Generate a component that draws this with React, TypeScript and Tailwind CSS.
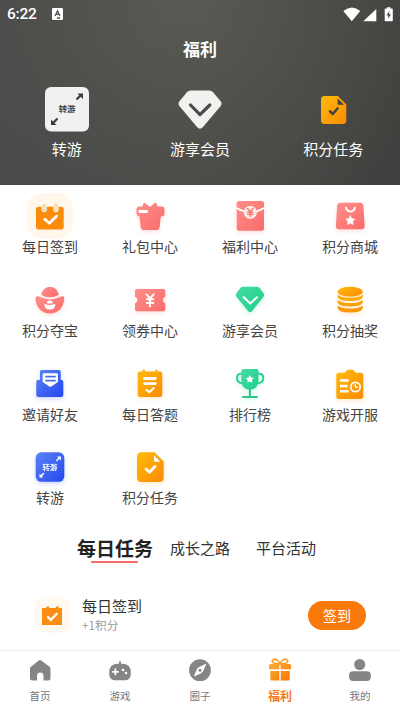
import type { ReactNode } from 'react';

const STAR = 'M0-4.6 1.5-1.7 4.6-1.2 2.4 1.1 2.8 4.3 0 2.9-2.8 4.3-2.4 1.1-4.6-1.2-1.5-1.7Z';

function Gradients() {
  return (
    <svg className="absolute w-0 h-0" aria-hidden="true">
      <defs>
        <linearGradient id="pink" x1="0" y1="0" x2="1" y2="1">
          <stop stopColor="#ff8e8a" />
          <stop offset="1" stopColor="#f96c6a" />
        </linearGradient>
        <linearGradient id="orange" x1="0" y1="0" x2="1" y2="1">
          <stop stopColor="#ffba0a" />
          <stop offset="1" stopColor="#fb8b05" />
        </linearGradient>
        <linearGradient id="green" x1="0" y1="0" x2="1" y2="1">
          <stop stopColor="#45dca0" />
          <stop offset="1" stopColor="#1fcf8c" />
        </linearGradient>
        <linearGradient id="blue" x1="0" y1="0" x2="1" y2="1">
          <stop stopColor="#5c83f6" />
          <stop offset="1" stopColor="#2447ee" />
        </linearGradient>
      </defs>
    </svg>
  );
}

function Icon({ glow, children }: { glow: string; children: ReactNode }) {
  return (
    <svg viewBox="0 0 48 48" className={`w-12 h-12 ${glow}`} fill="none" strokeLinecap="round" strokeLinejoin="round">
      {children}
    </svg>
  );
}

const PINK = 'drop-shadow-[0_2px_2px_rgba(255,110,105,0.2)]';
const ORANGE = 'drop-shadow-[0_2px_2px_rgba(255,165,20,0.2)]';
const GREEN = 'drop-shadow-[0_2px_2px_rgba(40,210,145,0.2)]';
const BLUE = 'drop-shadow-[0_2px_2px_rgba(50,90,240,0.25)]';

const CalendarIcon = () => (
  <Icon glow="">
    <rect x="1" y="1" width="46" height="46" rx="15" fill="#fff7ec" />
    <rect x="10" y="14.7" width="27.7" height="22.8" rx="2.5" fill="#fb8c0a" />
    <path d="M18.2 13.8V17.5M30 13.8V17.5" stroke="#fff7ec" strokeWidth="5.4" />
    <path d="M18.2 13.8V17.5M30 13.8V17.5" stroke="#f5cf8c" strokeWidth="3.6" />
    <path d="M18.2 14V17.5M30 14V17.5" stroke="#fff7ec" strokeWidth="1.2" />
    <path d="M18.8 27.3 23.3 31.3 30.7 24" stroke="#fff" strokeWidth="2.8" />
  </Icon>
);

const GiftBoxIcon = () => (
  <Icon glow={PINK}>
    <path d="M17.4 11.3q.6-.9 1.6-.2l5 3.8 4.8-3.8q1-.7 1.6.2l1 3.2h4.2q2.9 0 2.9 3v4q0 2.7-2.7 2.8l-1 .2-1.2 10.4Q33.3 38 30.5 38H17.8Q15 38 14.7 35L13.5 24.5l-1-.2q-2-.5-2-2.8v-4q0-3 3-3h3Z" fill="url(#pink)" />
    <rect x="12.5" y="18.1" width="9.4" height="2.8" rx="1.2" fill="#fff" />
  </Icon>
);

const EnvelopeIcon = () => (
  <Icon glow={PINK}>
    <rect x="10.7" y="9" width="27.3" height="29.7" rx="2.5" fill="url(#pink)" />
    <path d="M10.7 16Q24.3 24.5 38 16" stroke="#fff" strokeWidth="2" strokeLinecap="butt" />
    <circle cx="24.3" cy="20.3" r="6.6" fill="#ffe9e5" />
    <path d="M21.5 16.5 24.3 20 27.1 16.5M24.3 20V24.5M21.6 20.3H27M21.6 22.4H27" stroke="#f9716e" strokeWidth="1.3" />
  </Icon>
);

const BagIcon = () => (
  <Icon glow={PINK}>
    <path d="M14 10.7H34.5Q37 10.7 37.3 13.2L38.6 34Q38.6 37.3 35.5 37.3H13Q9.9 37.3 9.9 34L11.2 13.2Q11.5 10.7 14 10.7Z" fill="url(#pink)" />
    <path d="M20 15.6Q21 19.6 24.5 19.6T29 15.6" stroke="#fff" strokeWidth="1.9" />
    <path d={STAR} transform="translate(24.3 28.3)" fill="#fff" stroke="#fff" strokeWidth=".5" />
  </Icon>
);

const IngotIcon = () => (
  <Icon glow={PINK}>
    <path d="M15.3 19C16.5 13.5 19.5 11 24 11S31.5 13.5 32.7 19Q24 23.5 15.3 19Z" fill="url(#pink)" />
    <path d="M10.5 20.3Q12.500 19.800 14 21Q24 25.800 34 21Q35.700 19.800 37.500 20.300Q38.800 21 38.200 24C37 32 32 37.400 24 37.400S10.800 32 9.500 24Q9.200 21 10.500 20.300Z" fill="url(#pink)" />
    <path d="M20.6 26.9Q21.2 24.3 23.8 24.3T27 26.9Q23.8 28.3 20.6 26.9ZM18.5 27.7Q23.8 30.3 29.2 27.7Q29.800 33.500 23.800 33.500T18.500 27.700Z" fill="#fff" />
  </Icon>
);

const TicketIcon = () => (
  <Icon glow={PINK}>
    <path d="M11 13H37.300Q39.300 13 39.300 15V20.800Q36.800 21.800 36.800 24.200T39.300 27.600V33.300Q39.300 35.300 37.300 35.300H11Q9 35.300 9 33.300V27.600Q11.500 26.600 11.500 24.200T9 20.800V15Q9 13 11 13Z" fill="url(#pink)" />
    <path d="M20.5 18.300 24 22.300 27.600 18.300M24 22.300V30.600M20.800 23.300H27.300M20.800 27H27.300" stroke="#fff" strokeWidth="2" />
  </Icon>
);

const DiamondIcon = () => (
  <Icon glow={GREEN}>
    <path d="M17 10.7H31Q32.500 10.700 33.500 11.800L37.700 17.500Q38.800 19.300 37.300 21L26 35.300Q24.200 37 22.300 35.300L10.600 21Q9.200 19.300 10.300 17.500L14.500 11.800Q15.500 10.700 17 10.700Z" fill="url(#green)" />
    <path d="M17.700 21.300 24.200 27.500 31 21.300" stroke="#fff" strokeWidth="2.200" />
  </Icon>
);

const CoinsIcon = () => (
  <Icon glow={ORANGE}>
    <ellipse cx="24.200" cy="15.700" rx="12.500" ry="5" fill="url(#orange)" />
    <path d="M11.700 18.500Q14.500 21.700 24.200 21.700T36.700 18.500V21Q36 25 24.200 25T11.700 21Z" fill="#fbab08" />
    <path d="M11.700 24Q14.500 27.100 24.200 27.100T36.700 24V26.500Q36 30.500 24.200 30.500T11.700 26.500Z" fill="#fba007" />
    <path d="M11.700 29.500Q14.500 32.600 24.200 32.600T36.700 29.500V32Q36 36.500 24.200 36.500T11.700 32Z" fill="#fb9706" />
  </Icon>
);

const MailIcon = () => (
  <Icon glow={BLUE}>
    <path d="M15.500 10H33.200Q34.700 10 34.700 11.500V20H35.800Q37.300 20 37.300 21.500V35Q37.300 37 35.300 37H12.300Q10.300 37 10.300 35V21.500Q10.300 20 11.800 20H14V11.500Q14 10 15.500 10Z" fill="url(#blue)" />
    <path d="M18 13.200H30.800Q32 13.200 32 14.400V22L24.900 26.700Q24.300 27 23.700 26.700L16.700 22V14.400Q16.700 13.200 18 13.200Z" fill="#fff" />
    <path d="M20 16.600H29M20 20.600H29" stroke="#4d6df0" strokeWidth="1.900" />
  </Icon>
);

const QuizIcon = () => (
  <Icon glow={ORANGE}>
    <path d="M14 11.500H16.500V10.500Q16.500 9.500 17.700 9.500T19 10.500V11.500H29.300V10.500Q29.300 9.500 30.400 9.500T31.500 10.500V11.500H34Q36.300 11.500 36.300 13.800V34.700Q36.300 37 34 37H14Q11.700 37 11.700 34.700V13.800Q11.700 11.500 14 11.500Z" fill="url(#orange)" />
    <path d="M18.500 18.500H29.300M18.500 23.600H29.300" stroke="#fff" strokeWidth="2.800" />
    <path d="M20.300 29.700 23.300 32.300 27.700 28" stroke="#fff" strokeWidth="1.900" />
  </Icon>
);

const TrophyIcon = () => (
  <Icon glow={GREEN}>
    <path d="M16.500 13.700H14.500Q11 14 11 18.300T16 23.200M31.500 13.700H33.700Q37.300 14 37.300 18.300T32 23.200" stroke="#2bd193" strokeWidth="2" />
    <path d="M17.500 9H30.300Q32.500 9 32.500 11V20Q32.500 29.700 23.900 29.700T15.300 20V11Q15.300 9 17.500 9Z" fill="url(#green)" />
    <path d="M23.900 29V36.500M17 36.900H31" stroke="#27c98a" strokeWidth="2" />
    <path d={STAR} transform="translate(23.800 19) scale(.88)" fill="#fff" />
  </Icon>
);

const ScheduleIcon = () => (
  <Icon glow={ORANGE}>
    <path d="M13 12.700H18.500L21 10.300Q21.700 9.700 22.500 9.700H26Q26.800 9.700 27.500 10.300L29.500 12.700H34.700Q37.300 12.700 37.300 15.300V36.300Q37.300 38.900 34.700 38.900H13Q10.300 38.900 10.300 36.300V15.300Q10.300 12.700 13 12.700Z" fill="url(#orange)" />
    <path d="M14 20.600H22.700M14 26H21.500M14 31.300H22.700" stroke="#fff" strokeWidth="2.500" strokeLinecap="butt" />
    <circle cx="29.500" cy="27" r="4.700" stroke="#fff" strokeWidth="1.700" />
    <path d="M29.300 24.700V27.200H31.700" stroke="#fff" strokeWidth="1.300" />
  </Icon>
);

const TransferIcon = () => (
  <Icon glow={BLUE}>
    <rect x="9.700" y="9.300" width="28.600" height="29.500" rx="5.500" fill="url(#blue)" />
    <text x="24" y="26.700" textAnchor="middle" fill="#fff" fontSize="7.400" fontWeight="700">转游</text>
    <path d="M30.800 17.500 33.500 14.800M17.500 30.500 14.800 33.200" stroke="#fff" strokeWidth="1.500" />
    <path d="M31 13.500H34.900V17.400ZM13.500 30.700V34.500H17.300Z" fill="#fff" />
  </Icon>
);

const TaskIcon = () => (
  <Icon glow={ORANGE}>
    <path d="M15.500 9.300H28.500L37.700 18.500V34.500Q37.700 39 33.200 39H15.500Q11 39 11 34.500V13.800Q11 9.300 15.500 9.300Z" fill="url(#orange)" />
    <path d="M28 12.300V17.500Q28 18.800 29.300 18.800H34.300Z" fill="#fff" />
    <path d="M20 26 23.500 29.300 29 23.500" stroke="#fff" strokeWidth="2.800" />
  </Icon>
);

const services = [
  { label: '每日签到', icon: <CalendarIcon /> },
  { label: '礼包中心', icon: <GiftBoxIcon /> },
  { label: '福利中心', icon: <EnvelopeIcon /> },
  { label: '积分商城', icon: <BagIcon /> },
  { label: '积分夺宝', icon: <IngotIcon /> },
  { label: '领券中心', icon: <TicketIcon /> },
  { label: '游享会员', icon: <DiamondIcon /> },
  { label: '积分抽奖', icon: <CoinsIcon /> },
  { label: '邀请好友', icon: <MailIcon /> },
  { label: '每日答题', icon: <QuizIcon /> },
  { label: '排行榜', icon: <TrophyIcon /> },
  { label: '游戏开服', icon: <ScheduleIcon /> },
  { label: '转游', icon: <TransferIcon /> },
  { label: '积分任务', icon: <TaskIcon /> },
];

const shortcuts = [
  {
    label: '转游',
    icon: (
      <svg viewBox="0 0 46 46" className="w-[46px] h-[46px]">
        <rect x="1" y="1" width="44" height="44.500" rx="6" fill="#f1f1f1" />
        <text x="23" y="26" textAnchor="middle" fill="#454545" fontSize="8.400" fontWeight="700">转游</text>
        <path d="M32.500 13.500 36.500 9.500M13.500 32.500 9.500 36.500" stroke="#3c3c3c" strokeWidth="2.200" />
        <path d="M33.500 7.500H39V13ZM7 33.500V39H12.500Z" fill="#3c3c3c" />
      </svg>
    ),
  },
  {
    label: '游享会员',
    icon: (
      <svg viewBox="0 0 46 46" className="w-[46px] h-[46px]" fill="none" strokeLinecap="round" strokeLinejoin="round">
        <path d="M13.500 4.600H32.500Q34.500 4.600 36 6.200L43.500 15Q45.600 17.600 43.500 20.200L26 41Q23 44.500 20 41L2.600 20.200Q.5 17.600 2.600 15L10 6.200Q11.500 4.600 13.500 4.600Z" fill="#f1f1ef" />
        <path d="M13.500 19 23 28.700 32.800 19" stroke="#4b4b49" strokeWidth="3.200" />
      </svg>
    ),
  },
  {
    label: '积分任务',
    icon: (
      <svg viewBox="0 0 46 46" className="w-[46px] h-[46px]" fill="none" strokeLinecap="round" strokeLinejoin="round">
        <path d="M14.500 10H28L36.300 18.500V34.500Q36.300 38 33 38H14.500Q11 38 11 34.500V13.500Q11 10 14.500 10Z" fill="url(#orange)" />
        <path d="M27.700 12.300V18.700H34Z" fill="#444441" />
        <path d="M20 25.300 22.800 28 27.500 22.500" stroke="#444441" strokeWidth="2.600" />
      </svg>
    ),
  },
];

const navItems = [
  {
    label: '首页',
    icon: <path d="M10.700 2.500Q12 1.500 13.300 2.500L21.600 8.700Q22.500 9.500 22.500 10.700V20Q22.500 22.500 20 22.500H15.500V18Q15.500 14.500 12.200 14.500T9 18V22.500H4.500Q2 22.500 2 20V10.700Q2 9.500 2.900 8.700Z" fill="#858585" />,
  },
  {
    label: '游戏',
    icon: (
      <>
        <path d="M12 7V3.800" stroke="#858585" strokeWidth="1.800" />
        <path d="M9 5.700H15Q22.900 6.300 22.900 14.500Q22.900 22.300 17.500 22.300H6.500Q1.100 22.300 1.100 14.500Q1.100 6.300 9 5.700Z" fill="#858585" />
        <path d="M7.400 11.200V16.400M4.800 13.800H10" stroke="#fff" strokeWidth="1.700" />
        <circle cx="15" cy="12" r="1.300" fill="#fff" />
        <circle cx="18" cy="15" r="1.300" fill="#fff" />
      </>
    ),
  },
  {
    label: '圈子',
    icon: (
      <>
        <circle cx="12" cy="12.200" r="10.900" fill="#858585" />
        <path d="M17.500 6.700 14.500 13.500Q14.100 14.300 13.300 14.700L6.500 17.700 9.500 10.900Q9.900 10.100 10.700 9.700Z" fill="#fff" stroke="#fff" />
        <circle cx="12" cy="12.200" r="1.500" fill="#858585" />
      </>
    ),
  },
  {
    label: '福利',
    active: true,
    icon: (
      <>
        <path d="M12 6Q10 1.200 6.500 1.200Q3.800 1.500 4.300 3.800Q5 6 12 6ZM12 6Q14 1.200 17.500 1.200Q20.200 1.500 19.700 3.800Q19 6 12 6Z" stroke="#fb9c1b" strokeWidth="1.500" />
        <path d="M2.500 6H11.300V11.200H1V7.500Q1 6 2.500 6ZM12.700 6H21.500Q23 6 23 7.500V11.200H12.700ZM2.300 13H11.300V22.500H3.800Q2.300 22.500 2.300 21ZM12.700 13H21.700V21Q21.700 22.500 20.200 22.500H12.700Z" fill="url(#navGift)" />
        <defs>
          <linearGradient id="navGift" x1="0" y1="0" x2="1" y2="1">
            <stop stopColor="#fdb034" />
            <stop offset="1" stopColor="#f97306" />
          </linearGradient>
        </defs>
      </>
    ),
  },
  {
    label: '我的',
    icon: (
      <>
        <circle cx="11.700" cy="6.500" r="5.500" fill="#858585" />
        <rect x="1.100" y="13.300" width="21.700" height="9.600" rx="4" fill="#858585" />
      </>
    ),
  },
];

function StatusBar() {
  return (
    <div className="flex h-7 items-center pl-[7px] pr-[7px] text-white">
      <span className="w-[31px] font-[Roboto] text-[15.500px] font-medium leading-7 tracking-[-0.2px]">6:22</span>
      <svg viewBox="0 0 11 12" className="ml-[14px] w-[11px] h-3" fill="none">
        <rect width="11" height="12" rx="1.300" fill="#fff" />
        <path d="M3.100 8 5.500 2.800 7.900 8M4 6.400H7M5 10H8" stroke="#50504d" strokeWidth="1.300" />
      </svg>
      <svg viewBox="0 0 50 15" className="ml-auto w-[50px] h-[15px]">
        <path d="M.3 4Q9 -3 17.300 4L8.800 14.300Z" fill="#fff" />
        <path d="M20.500 14.300V13.900L33.300 2V14.300Z" fill="#fff" />
        <path d="M42.500 1.500H44V.2H47.500V1.500H49Q49.800 1.500 49.800 2.300V13.500Q49.800 14.300 49 14.300H42.500Q41.700 14.300 41.700 13.500V2.300Q41.700 1.500 42.500 1.500Z" fill="#fff" />
        <path d="M46.500 3.800 43.500 8.500H45.500L44.900 12 48 7.200H46Z" fill="#444" />
      </svg>
    </div>
  );
}

export default function App() {
  return (
    <div className="relative flex h-[710px] w-[400px] flex-col overflow-hidden bg-white font-['Noto_Sans_CJK_SC',sans-serif]">
      <Gradients />
      <header className="h-[185px] shrink-0 bg-[radial-gradient(ellipse_260px_250px_at_46%_0%,#5a5a54_0%,rgba(84,84,79,0.6)_50%,rgba(70,70,68,0)_100%),linear-gradient(90deg,#4a4a4a,#484847_50%,#40403e)]">
        <StatusBar />
        <h1 className="text-center text-[17px] font-bold leading-[42px] text-white">福利</h1>
        <div className="mt-4 grid grid-cols-3">
          {shortcuts.map((s) => (
            <div key={s.label} className="flex flex-col items-center">
              {s.icon}
              <span className="mt-[5px] text-[15px] leading-6 text-white">{s.label}</span>
            </div>
          ))}
        </div>
      </header>

      <section className="grid grid-cols-4 pt-[7px]">
        {services.map((s) => (
          <div key={s.label} className="flex h-[83.800px] flex-col items-center">
            {s.icon}
            <span className="-mt-[5px] text-sm leading-[22px] text-[#444]">{s.label}</span>
          </div>
        ))}
      </section>

      <nav className="flex h-10 items-center pl-[77px] pt-[2px]">
        <div className="flex flex-col items-center">
          <span className="mt-0.5 text-[19px] font-bold leading-[26px] text-[#222]">每日任务</span>
          <span className="mr-0.5 h-0.5 w-[47px] rounded-full bg-[#f76c6b]" />
        </div>
        <span className="ml-[17px] text-[15px] text-[#333]">成长之路</span>
        <span className="ml-[26px] text-[15px] text-[#333]">平台活动</span>
      </nav>

      <div className="flex items-center pl-[35px] pr-[34px] pt-[29px]">
        <svg viewBox="0 0 35 36" className="w-[35px] h-9" fill="none">
          <rect width="35" height="36" rx="9" fill="#fff9ef" />
          <path d="M7 11H11Q11.300 9.300 12.800 9.300T14.500 11H20.500Q20.800 9.300 22.300 9.300T24 11H27V28H7Z" fill="#fb8c14" />
          <path d="M12.300 19.500 15.800 22.800 22.300 16.300" stroke="#fff" strokeWidth="2.300" />
        </svg>
        <div className="ml-3 flex flex-col">
          <span className="text-[15px] leading-5 text-[#333]">每日签到</span>
          <span className="text-[11.700px] leading-[18px] text-[#999]">+1积分</span>
        </div>
        <button className="ml-auto h-[29px] w-[58px] rounded-full bg-[#f9790a] text-sm text-white">签到</button>
      </div>

      <footer className="mt-auto grid h-[60px] grid-cols-5 border-t border-[#eee] bg-white pt-[7px]">
        {navItems.map((item) => (
          <div key={item.label} className="flex flex-col items-center">
            <svg viewBox="0 0 24 24" className="w-6 h-6" fill="none" strokeLinecap="round" strokeLinejoin="round">
              {item.icon}
            </svg>
            <span className={item.active ? 'mt-1 text-[12px] font-bold leading-5 text-[#f9791a]' : 'mt-1 text-[10.500px] leading-5 text-[#777]'}>
              {item.label}
            </span>
          </div>
        ))}
      </footer>
    </div>
  );
}
